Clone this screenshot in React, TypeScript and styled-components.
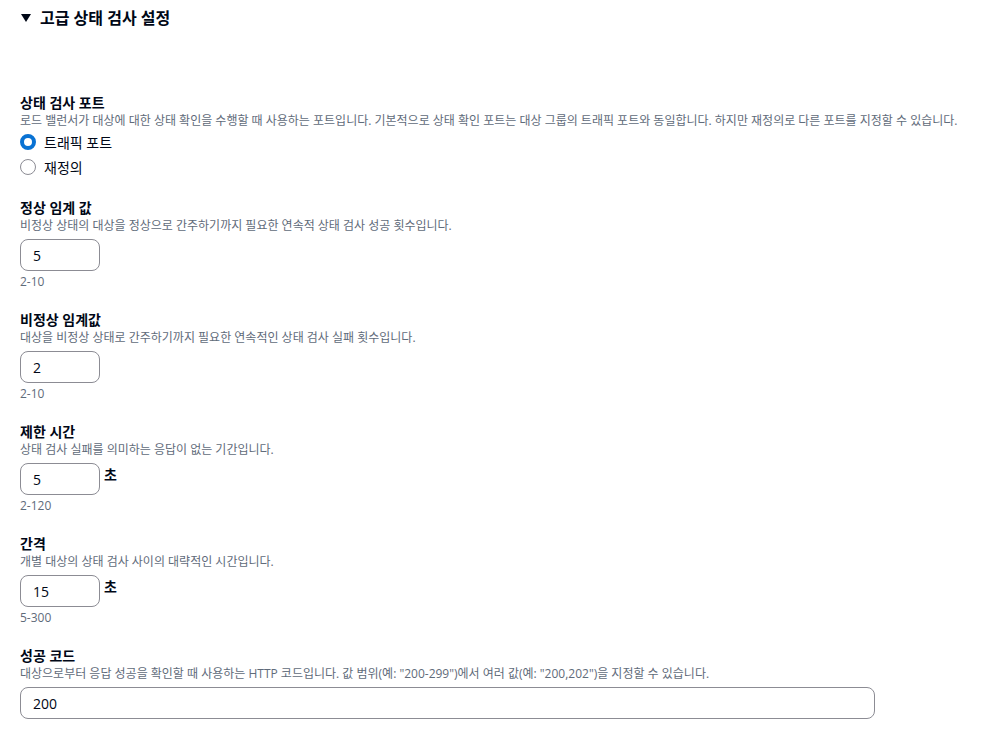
import React from 'react';
import styled, { createGlobalStyle } from 'styled-components';

const GlobalStyle = createGlobalStyle`
  body {
    margin: 0;
    background: #ffffff;
    color: #000716;
    font-family: "Open Sans", "Noto Sans CJK KR", sans-serif;
  }
`;

const Page = styled.div`
  padding: 8px 20px 0;
`;

const Header = styled.div`
  display: flex;
  align-items: center;
  gap: 9px;
  font-size: 16px;
  font-weight: 700;
  line-height: 20px;
`;

const Caret = styled.span`
  width: 0;
  height: 0;
  border-left: 5px solid transparent;
  border-right: 5px solid transparent;
  border-top: 8px solid #000716;
  margin-left: 1px;
`;

const Body = styled.div`
  display: flex;
  flex-direction: column;
  gap: 20px;
  padding-top: 65px;
`;

const Field = styled.div`
  display: flex;
  flex-direction: column;
`;

const Label = styled.div`
  font-size: 14px;
  font-weight: 700;
  line-height: 20px;
`;

const Description = styled.div`
  font-size: 12px;
  line-height: 16px;
  color: #5f6b7a;
`;

const Hint = styled(Description)`
  margin-top: 3px;
`;

const RadioGroup = styled.div`
  display: flex;
  flex-direction: column;
  gap: 3px;
  margin-top: 2px;
`;

const RadioRow = styled.label`
  display: flex;
  align-items: center;
  gap: 8px;
  height: 22px;
  font-size: 14px;
`;

const RadioDot = styled.span<{ $checked?: boolean }>`
  box-sizing: border-box;
  width: 16px;
  height: 16px;
  border-radius: 50%;
  background: #ffffff;
  border: ${({ $checked }) => ($checked ? '4.5px solid #0972d3' : '1px solid #8c8c94')};
`;

const ControlRow = styled.div`
  display: flex;
  align-items: flex-start;
  gap: 4px;
  margin-top: 5px;
`;

const Input = styled.div<{ $wide?: boolean }>`
  box-sizing: border-box;
  width: ${({ $wide }) => ($wide ? '855px' : '80px')};
  height: 32px;
  border: 1px solid #8c8c94;
  border-radius: 8px;
  padding: 0 12px;
  display: flex;
  align-items: center;
  font-size: 14px;
`;

const Unit = styled.span`
  font-size: 14px;
  font-weight: 700;
  line-height: 24px;
`;

type NumberField = {
  label: string;
  description: string;
  value: string;
  hint: string;
  unit?: string;
};

const numberFields: NumberField[] = [
  {
    label: '정상 임계 값',
    description: '비정상 상태의 대상을 정상으로 간주하기까지 필요한 연속적 상태 검사 성공 횟수입니다.',
    value: '5',
    hint: '2-10',
  },
  {
    label: '비정상 임계값',
    description: '대상을 비정상 상태로 간주하기까지 필요한 연속적인 상태 검사 실패 횟수입니다.',
    value: '2',
    hint: '2-10',
  },
  {
    label: '제한 시간',
    description: '상태 검사 실패를 의미하는 응답이 없는 기간입니다.',
    value: '5',
    hint: '2-120',
    unit: '초',
  },
  {
    label: '간격',
    description: '개별 대상의 상태 검사 사이의 대략적인 시간입니다.',
    value: '15',
    hint: '5-300',
    unit: '초',
  },
];

const App: React.FC = () => (
  <Page>
    <GlobalStyle />
    <Header>
      <Caret />
      고급 상태 검사 설정
    </Header>
    <Body>
      <Field>
        <Label>상태 검사 포트</Label>
        <Description>
          로드 밸런서가 대상에 대한 상태 확인을 수행할 때 사용하는 포트입니다. 기본적으로 상태 확인 포트는 대상 그룹의 트래픽 포트와 동일합니다. 하지만 재정의로 다른 포트를 지정할 수 있습니다.
        </Description>
        <RadioGroup>
          <RadioRow>
            <RadioDot $checked />
            트래픽 포트
          </RadioRow>
          <RadioRow>
            <RadioDot />
            재정의
          </RadioRow>
        </RadioGroup>
      </Field>

      {numberFields.map((f) => (
        <Field key={f.label}>
          <Label>{f.label}</Label>
          <Description>{f.description}</Description>
          <ControlRow>
            <Input>{f.value}</Input>
            {f.unit && <Unit>{f.unit}</Unit>}
          </ControlRow>
          <Hint>{f.hint}</Hint>
        </Field>
      ))}

      <Field>
        <Label>성공 코드</Label>
        <Description>
          대상으로부터 응답 성공을 확인할 때 사용하는 HTTP 코드입니다. 값 범위(예: "200-299")에서 여러 값(예: "200,202")을 지정할 수 있습니다.
        </Description>
        <ControlRow>
          <Input $wide>200</Input>
        </ControlRow>
      </Field>
    </Body>
  </Page>
);

export default App;
